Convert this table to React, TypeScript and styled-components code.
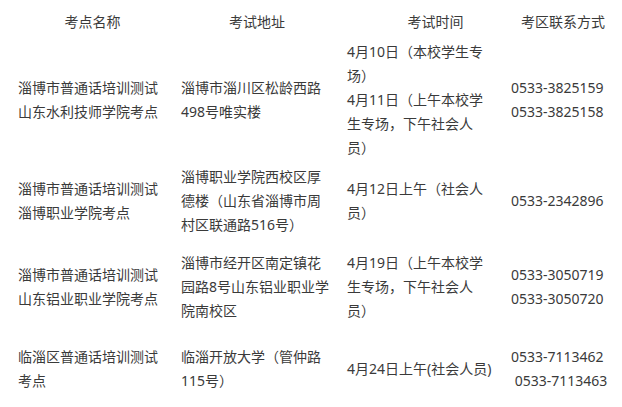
import styled, { createGlobalStyle } from "styled-components";

const GlobalStyle = createGlobalStyle`
	body {
		margin: 0;
		background: #fff;
	}
`;

interface RowData {
	name: string;
	address: string;
	times: string[];
	phones: string[];
	pad: number;
}

const rows: RowData[] = [
	{
		name: "淄博市普通话培训测试山东水利技师学院考点",
		address: "淄博市淄川区松龄西路498号唯实楼",
		times: ["4月10日（本校学生专场）", "4月11日（上午本校学生专场，下午社会人员）"],
		phones: ["0533-3825159", "0533-3825158"],
		pad: 3,
	},
	{
		name: "淄博市普通话培训测试淄博职业学院考点",
		address: "淄博职业学院西校区厚德楼（山东省淄博市周村区联通路516号）",
		times: ["4月12日上午（社会人员）"],
		phones: ["0533-2342896"],
		pad: 2,
	},
	{
		name: "淄博市普通话培训测试山东铝业职业学院考点",
		address: "淄博市经开区南定镇花园路8号山东铝业职业学院南校区",
		times: ["4月19日（上午本校学生专场，下午社会人员）"],
		phones: ["0533-3050719", "0533-3050720"],
		pad: 12,
	},
	{
		name: "临淄区普通话培训测试考点",
		address: "临淄开放大学（管仲路115号）",
		times: ["4月24日上午(社会人员)"],
		phones: ["0533-7113462", "\u00a00533-7113463"],
		pad: 10,
	},
];

export default function App() {
	return (
		<Page>
			<GlobalStyle />
			<Table>
				<colgroup>
					<col style={{ width: 163 }} />
					<col style={{ width: 166 }} />
					<col style={{ width: 164 }} />
					<col style={{ width: 118 }} />
				</colgroup>
				<thead>
					<tr>
						<HeadCell>考点名称</HeadCell>
						<HeadCell>考试地址</HeadCell>
						<HeadCell $shift={27}>考试时间</HeadCell>
						<HeadCell>考区联系方式</HeadCell>
					</tr>
				</thead>
				<tbody>
					{rows.map(row => (
						<tr key={row.name}>
							<Cell $pad={row.pad}>{row.name}</Cell>
							<Cell $pad={row.pad}>{row.address}</Cell>
							<Cell $pad={row.pad}>
								{row.times.map(t => (
									<Line key={t}>{t}</Line>
								))}
							</Cell>
							<Cell $pad={row.pad}>
								{row.phones.map(p => (
									<Line key={p}>{p}</Line>
								))}
							</Cell>
						</tr>
					))}
				</tbody>
			</Table>
		</Page>
	);
}

const Page = styled.div`
	padding-left: 11px;
	font-family: "Noto Sans", "Noto Sans CJK SC", sans-serif;
	font-size: 14px;
	line-height: 24px;
	color: #3a3a3a;
	text-spacing-trim: space-all;
`;

const Table = styled.table`
	width: 611px;
	table-layout: fixed;
	border-collapse: collapse;
	border-spacing: 0;
`;

const HeadCell = styled.th<{ $shift?: number }>`
	padding: 10px 7px 3px ${p => 7 + (p.$shift ?? 0)}px;
	font-weight: 400;
	text-align: center;
	vertical-align: middle;
`;

const Cell = styled.td<{ $pad: number }>`
	padding: ${p => p.$pad}px 7px;
	text-align: left;
	vertical-align: middle;
	word-break: normal;
`;

const Line = styled.p`
	margin: 0;
`;
